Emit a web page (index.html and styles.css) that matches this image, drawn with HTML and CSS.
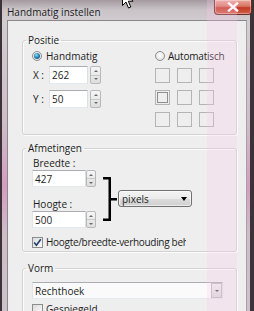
FILE: index.html
```html
<!DOCTYPE html>
<html lang="nl">
<head>
<meta charset="utf-8">
<title>Handmatig instellen</title>
<link rel="stylesheet" href="styles.css">
</head>
<body>
<div class="window">
  <div class="titlebar">
    <span class="title">Handmatig instellen</span>
    <div class="close">
      <svg width="12" height="10" viewBox="0 0 12 10"><path d="M2 1.5 L10 8.5 M10 1.5 L2 8.5" stroke="#fff" stroke-width="2.4" stroke-linecap="square"/></svg>
    </div>
  </div>
  <div class="frame-body">
    <div class="client">
      <fieldset class="group g-positie">
        <legend>Positie</legend>
        <div class="pos">
          <div class="pos-left">
            <label class="radio"><span class="radio-dot checked"></span>Handmatig</label>
            <div class="coord c-x"><span class="coord-label">X :</span><span class="field f-coord">262</span><span class="spinner"><span class="spin-up"></span><span class="spin-down"></span></span></div>
            <div class="coord c-y"><span class="coord-label">Y :</span><span class="field f-coord">50</span><span class="spinner"><span class="spin-up"></span><span class="spin-down"></span></span></div>
          </div>
          <div class="pos-right">
            <label class="radio"><span class="radio-dot"></span>Automatisch</label>
            <div class="anchors">
              <span class="cell"></span><span class="cell"></span><span class="cell"></span>
              <span class="cell sel"></span><span class="cell"></span><span class="cell"></span>
              <span class="cell"></span><span class="cell"></span><span class="cell"></span>
            </div>
          </div>
        </div>
      </fieldset>

      <fieldset class="group g-afm">
        <legend>Afmetingen</legend>
        <div class="dims">
          <div class="dims-col">
            <span class="dim-label l-b">Breedte :</span>
            <div class="dim-input"><span class="field f-dim">427</span><span class="spinner"><span class="spin-up"></span><span class="spin-down"></span></span></div>
            <span class="dim-label l-h">Hoogte :</span>
            <div class="dim-input"><span class="field f-dim">500</span><span class="spinner"><span class="spin-up"></span><span class="spin-down"></span></span></div>
          </div>
          <svg class="bracket" width="14" height="44" viewBox="0 0 14 44">
            <rect x="0" y="0" width="8" height="2.5" fill="#000"/>
            <rect x="5.5" y="0" width="2.5" height="44" fill="#000"/>
            <rect x="0" y="41.5" width="8" height="2.5" fill="#000"/>
            <rect x="8" y="21" width="6" height="2.5" fill="#000"/>
          </svg>
          <div class="combo c-unit"><span>pixels</span><span class="arrow"></span></div>
        </div>
        <label class="check c-ratio"><span class="box checked"><svg width="9" height="9" viewBox="0 0 9 9"><path d="M1.2 4.6 L3.4 7.2 L7.8 1.2" fill="none" stroke="#1c3f6e" stroke-width="1.6"/></svg></span><span class="check-text">Hoogte/breedte-verhouding behouden</span></label>
      </fieldset>

      <fieldset class="group g-vorm">
        <legend>Vorm</legend>
        <div class="edit-combo"><span class="ec-text">Rechthoek</span><span class="ec-btn"><span class="arrow small"></span></span></div>
        <label class="check c-mirror"><span class="box"></span><span class="check-text">Gespiegeld</span></label>
      </fieldset>
    </div>
  </div>
  <svg class="cursor" width="12" height="19" viewBox="0 0 12 19"><path d="M0.5 0.5 L0.5 15.5 L4 12 L6.5 18 L8.8 17 L6.3 11.2 L11 11.2 Z" fill="#fff" stroke="#000" stroke-width="1"/></svg>
</div>
</body>
</html>
```
FILE: styles.css
```css
* { box-sizing: border-box; }
html, body { margin: 0; padding: 0; }
body {
  width: 254px;
  height: 311px;
  overflow: hidden;
  background: #3e3239;
  font-family: "Open Sans", "Noto Sans", sans-serif;
  font-size: 10px;
  color: #1c1c1c;
}
.window {
  position: relative;
  width: 254px;
  height: 311px;
  display: flex;
  flex-direction: column;
  overflow: hidden;
  background:
    linear-gradient(to right, #3e3239 0, #3e3239 2px, transparent 2px, transparent 250px, #3e3239 250px),
    linear-gradient(to bottom, #a39aa0 0, #c9c3c8 10px, #d2cdd1 22px, #cdbdc8 40%, #d49dc1 60%, #cdbdc8 75%, #cbc3c9 100%);
}
.window::after {
  content: "";
  position: absolute;
  left: 207px;
  top: 0;
  width: 30px;
  bottom: 0;
  background: rgba(255, 200, 230, 0.26);
  pointer-events: none;
}
.titlebar {
  height: 22px;
  display: flex;
  align-items: flex-start;
  padding-left: 7px;
}
.title {
  padding-top: 5px;
  line-height: 15px;
  font-size: 10px;
  color: #1a1a1a;
  text-shadow: 0 0 5px rgba(255,255,255,0.6);
}
.close {
  margin-left: auto;
  margin-right: 2px;
  width: 38px;
  height: 15px;
  border: 1px solid #6d2a24;
  border-top: none;
  border-radius: 0 0 4px 4px;
  background: linear-gradient(to bottom, #e9a99c 0, #d77462 45%, #c23a26 55%, #d2604a 100%);
  display: flex;
  align-items: center;
  justify-content: center;
  box-shadow: inset 0 0 0 1px rgba(255,255,255,0.35);
}
.frame-body {
  flex: 1;
  display: flex;
  padding: 0 7px;
}
.client {
  flex: 1;
  background: #eeeeee;
  border-top: 1px solid #8c868b;
  border-left: 1px solid #8c868b;
  border-right: 1px solid #a9a0a6;
  padding-left: 14px;
  display: flex;
  flex-direction: column;
  align-items: flex-start;
}
.group {
  margin: 0;
  width: 215px;
  min-width: 0;
  border: 1px solid #d3d3d3;
  border-radius: 3px;
  box-shadow: inset 1px 1px 0 #fbfbfb, 1px 1px 0 #fbfbfb;
  padding: 0 0 0 9px;
}
.group legend {
  padding: 0 2px;
  margin-left: -6px;
  line-height: 14px;
  font-size: 10px;
}
.g-positie { margin-top: 12px; }
.g-afm { margin-top: 6px; }
.g-vorm { margin-top: 9px; }

/* Positie */
.pos {
  display: grid;
  grid-template-columns: 123px auto;
  padding-top: 2px;
  padding-bottom: 7px;
}
.radio {
  display: flex;
  align-items: center;
  height: 14px;
}
.radio-dot {
  width: 10px;
  height: 10px;
  border-radius: 50%;
  border: 1px solid #8b8d8e;
  background: radial-gradient(circle at 50% 40%, #ffffff 0, #e6e6e6 70%, #d4d4d4 100%);
  margin-right: 4px;
  display: flex;
  align-items: center;
  justify-content: center;
}
.radio-dot.checked::before {
  content: "";
  width: 6px;
  height: 6px;
  border-radius: 50%;
  background: radial-gradient(circle at 40% 35%, #9fe0f3 0, #2d84b8 45%, #12446e 100%);
}
.coord {
  display: flex;
  align-items: center;
  height: 18px;
}
.c-x { margin-top: 3px; }
.c-y { margin-top: 6px; }
.coord-label {
  width: 17px;
  padding-left: 1px;
}
.field {
  height: 100%;
  background: #fff;
  border: 1px solid #abadb3;
  border-color: #abadb3 #dbdfe6 #e3e9ef #e2e3ea;
  padding-left: 2px;
  display: flex;
  align-items: center;
}
.f-coord { width: 39px; }
.spinner {
  height: 100%;
  width: 11px;
  margin-left: 2px;
  border: 1px solid #b9b9b9;
  border-radius: 2px;
  display: flex;
  flex-direction: column;
  background: linear-gradient(to bottom, #f6f6f6, #dedede);
}
.spin-up, .spin-down {
  flex: 1;
  display: flex;
  align-items: center;
  justify-content: center;
}
.spin-up { border-bottom: 1px solid #c8c8c8; }
.spin-up::before {
  content: "";
  border-left: 2px solid transparent;
  border-right: 2px solid transparent;
  border-bottom: 2px solid #6a6a6a;
}
.spin-down::before {
  content: "";
  border-left: 2px solid transparent;
  border-right: 2px solid transparent;
  border-top: 2px solid #6a6a6a;
}
.pos-right .radio-dot { margin-right: 3px; }
.pos-right .radio { letter-spacing: -0.2px; }
.anchors {
  margin-top: 5px;
  display: grid;
  grid-template-columns: repeat(3, 15px);
  grid-auto-rows: 15px;
  gap: 7px;
}
.cell {
  border: 1px solid #b4b4b4;
  display: flex;
  align-items: center;
  justify-content: center;
}
.cell.sel::before {
  content: "";
  width: 9px;
  height: 9px;
  border: 1px solid #8e8e8e;
}

/* Afmetingen */
.dims {
  display: flex;
  align-items: flex-start;
  padding-top: 2px;
}
.dims-col {
  width: 64px;
  display: flex;
  flex-direction: column;
}
.dim-label {
  line-height: 13px;
  padding-left: 1px;
}
.l-h { margin-top: 10px; line-height: 14px; }
.dim-input {
  display: flex;
  height: 17px;
}
.f-dim { width: 54px; }
.dim-input .spinner { width: 10px; margin-left: 0; }
.bracket {
  margin-left: 7px;
  margin-top: 20px;
  flex: none;
}
.combo {
  margin-left: 1px;
  margin-top: 33px;
  width: 74px;
  height: 17px;
  border: 1px solid #707070;
  border-radius: 3px;
  background: linear-gradient(to bottom, #f3f3f3 0, #ebebeb 50%, #dddddd 51%, #cfcfcf 100%);
  box-shadow: inset 0 0 0 1px rgba(255,255,255,0.6);
  display: flex;
  align-items: center;
  padding-left: 3px;
  padding-right: 4px;
}
.combo span:first-child { flex: 1; }
.arrow {
  width: 0;
  height: 0;
  border-left: 3.5px solid transparent;
  border-right: 3.5px solid transparent;
  border-top: 4px solid #000;
}
.check {
  display: flex;
  align-items: center;
  height: 14px;
  width: 154px;
  overflow: hidden;
  white-space: nowrap;
}
.c-ratio { margin-top: 7px; margin-bottom: 2px; }
.c-ratio .check-text { letter-spacing: -0.3px; }
.box {
  flex: none;
  width: 11px;
  height: 11px;
  border: 1px solid #8b8d8e;
  background: linear-gradient(135deg, #dcdcdc, #fbfbfb);
  margin-right: 2px;
  display: flex;
  align-items: center;
  justify-content: center;
}
.check-text { padding-left: 1px; }

/* Vorm */
.edit-combo {
  margin-top: 7px;
  width: 191px;
  height: 17px;
  border: 1px solid #abadb3;
  border-color: #abadb3 #dbdfe6 #e3e9ef #e2e3ea;
  background: #fafafa;
  display: flex;
  align-items: stretch;
}
.ec-text {
  flex: 1;
  padding-left: 2px;
  display: flex;
  align-items: center;
}
.ec-btn {
  width: 11px;
  border: 1px solid #bdbdbd;
  background: linear-gradient(to bottom, #efefef, #d9d9d9);
  display: flex;
  align-items: center;
  justify-content: center;
}
.arrow.small {
  border-left-width: 2px;
  border-right-width: 2px;
  border-top: 2px solid #555;
}
.c-mirror { margin-top: 3px; }

.cursor {
  position: absolute;
  left: 122px;
  top: -10px;
}
```
